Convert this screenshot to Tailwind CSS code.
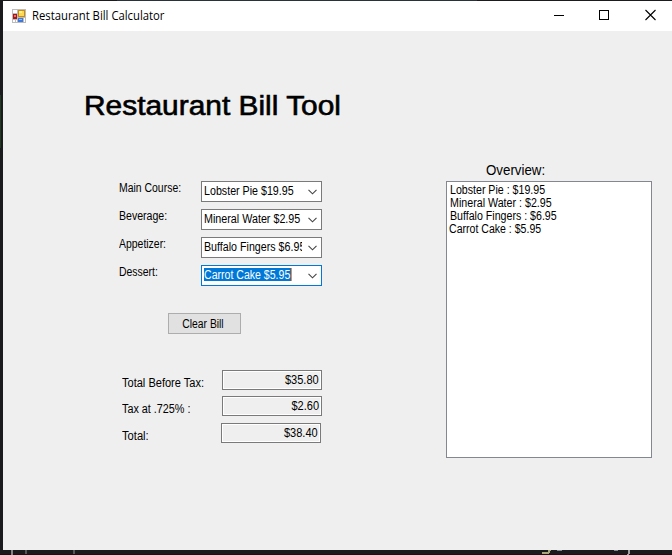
<!DOCTYPE html>
<html lang="en">
<head>
<meta charset="utf-8">
<title>Restaurant Bill Calculator</title>
<script src="https://cdn.jsdelivr.net/npm/@tailwindcss/browser@4"></script>
</head>
<body class="w-[672px] h-[555px] overflow-hidden bg-[#1b1b1d] pt-px pl-[3px] relative font-['Liberation_Sans',Arial,sans-serif] text-[12px] leading-[14px] text-black whitespace-nowrap">
  <!-- editor remnants behind the window -->
  <div class="absolute left-0 top-[95px] w-px h-[53px] bg-[#1f3a20]"></div>
  <svg class="absolute left-0 top-[550px]" width="672" height="5" shape-rendering="crispEdges">
    <path d="M0 4.5H672" stroke="#1a1017"/>
    <path d="M12 0V5" stroke="#858585" stroke-width="2"/>
    <path d="M26 0V4M74 0V4" stroke="#555" stroke-width="2"/>
    <path d="M542 3h6l2-3" stroke="#a9a67c" stroke-width="2" fill="none"/>
    <path d="M557 0.5h5M614 0.5h4" stroke="#7c8790"/>
    <path d="M629 0v3l-1 2" stroke="#a0a0a0" stroke-width="2" fill="none"/>
  </svg>
  <div class="absolute left-[117px] top-0 w-[360px] h-px bg-[#29323a]"></div>

  <div class="w-[669px] h-[549px] bg-[#efefef]">
    <header class="h-[30px] bg-white flex items-center">
      <svg class="ml-[9px] -mt-px" width="14" height="14" shape-rendering="crispEdges">
        <rect width="14" height="14" fill="#bcbcbc"/>
        <path d="M1 1h4v3H1zM1 11h2v2H1zM4 11h1v2H4zM12 9h1v4h-1z" fill="#fff"/>
        <rect x="6" y="1" width="7" height="7" fill="#c88d0c"/>
        <rect x="7" y="2" width="5" height="5" fill="#ffd84f"/>
        <rect x="7" y="2" width="3" height="2" fill="#fff0a0"/>
        <rect x="1" y="5" width="4" height="5" fill="#a91616"/>
        <rect x="2" y="6" width="2" height="2" fill="#f07068"/>
        <rect x="6" y="9" width="5" height="4" fill="#3e78d8"/>
        <rect x="7" y="10" width="3" height="1" fill="#8cbcff"/>
      </svg>
      <h1 class="ml-[6px] w-[400px] font-['Open_Sans','Noto_Sans',sans-serif] text-[12px] leading-4 origin-left scale-x-[0.94]">Restaurant Bill Calculator</h1>
      <svg class="ml-auto mr-[12px] -mt-[2px]" width="106" height="12" shape-rendering="crispEdges" fill="none" stroke="#000">
        <path d="M0 6.5H10M45.5 1.5h9v9h-9z"/>
        <path d="M91.5 1L101.5 11M101.5 1L91.5 11" shape-rendering="auto" stroke-width="1.1"/>
      </svg>
    </header>

    <main class="flex h-[519px]">
      <section class="w-[443px] pt-[59px]">
        <h2 class="ml-[81px] h-[32px] w-[260px] text-[27px] leading-[32px] origin-left scale-x-[1.107] [-webkit-text-stroke:0.6px_#000]">Restaurant Bill Tool</h2>

        <div class="mt-[59px] ml-[116px] flex flex-col gap-[7px]">
          <div class="flex h-[21px]"><label class="w-[82px] origin-left scale-x-[0.87]">Main Course:</label>
            <div class="w-[121px] h-[21px] border border-[#7a7a7a] bg-white flex items-center justify-between pl-[2px] pr-[4px]"><div class="-mt-px w-[98px] h-[14px] overflow-hidden"><span class="inline-block origin-left scale-x-[0.89]">Lobster Pie $19.95</span></div><svg width="9" height="6" fill="none" stroke="#444" stroke-width="1.1"><path d="M.5 .8L4.5 4.8L8.5 .8"/></svg></div></div>
          <div class="flex h-[21px]"><label class="w-[82px] origin-left scale-x-[0.88]">Beverage:</label>
            <div class="w-[121px] h-[21px] border border-[#7a7a7a] bg-white flex items-center justify-between pl-[2px] pr-[4px]"><div class="-mt-px w-[98px] h-[14px] overflow-hidden"><span class="inline-block origin-left scale-x-[0.895]">Mineral Water $2.95</span></div><svg width="9" height="6" fill="none" stroke="#444" stroke-width="1.1"><path d="M.5 .8L4.5 4.8L8.5 .8"/></svg></div></div>
          <div class="flex h-[21px]"><label class="w-[82px] origin-left scale-x-[0.87]">Appetizer:</label>
            <div class="w-[121px] h-[21px] border border-[#7a7a7a] bg-white flex items-center justify-between pl-[2px] pr-[4px]"><div class="-mt-px w-[98px] h-[14px] overflow-hidden"><span class="inline-block origin-left scale-x-[0.89]">Buffalo Fingers $6.95</span></div><svg width="9" height="6" fill="none" stroke="#444" stroke-width="1.1"><path d="M.5 .8L4.5 4.8L8.5 .8"/></svg></div></div>
          <div class="flex h-[21px]"><label class="w-[82px] origin-left scale-x-[0.87]">Dessert:</label>
            <div class="w-[121px] h-[21px] border border-[#0078d7] bg-white flex items-center justify-between pl-[2px] pr-[4px]"><div class="-mt-[2px] w-[88px] h-[13px] leading-[14px] bg-[#0078d7] text-white border-r border-[#ff8728]"><span class="inline-block origin-left scale-x-[0.88]">Carrot Cake $5.95</span></div><svg width="9" height="6" fill="none" stroke="#444" stroke-width="1.1"><path d="M.5 .8L4.5 4.8L8.5 .8"/></svg></div></div>
        </div>

        <button class="mt-[27px] ml-[165px] w-[73px] h-[21px] border border-[#adadad] bg-[#e1e1e1] flex items-center justify-center"><span class="-ml-[2px] scale-x-[0.86]">Clear Bill</span></button>

        <div class="mt-[36px] ml-[119px]">
          <div class="flex h-[20px]"><span class="mt-[6px] w-[100px] origin-left scale-x-[0.92]">Total Before Tax:</span>
            <output class="w-[100px] h-[20px] border border-[#7a7a7a] shadow-[inset_0_0_0_1px_#fff] flex items-center justify-end pr-[2px]"><span class="origin-right scale-x-[0.92]">$35.80</span></output></div>
          <div class="mt-[6px] flex h-[20px]"><span class="mt-[6px] w-[100px] origin-left scale-x-[0.9]">Tax at .725% :</span>
            <output class="w-[100px] h-[20px] border border-[#7a7a7a] shadow-[inset_0_0_0_1px_#fff] flex items-center justify-end pr-[2px]"><span class="origin-right scale-x-[0.92]">$2.60</span></output></div>
          <div class="mt-[7px] flex h-[20px]"><span class="mt-[6px] w-[99px] origin-left scale-x-[0.93]">Total:</span>
            <output class="w-[100px] h-[20px] border border-[#7a7a7a] shadow-[inset_0_0_0_1px_#fff] flex items-center justify-end pr-[2px]"><span class="origin-right scale-x-[0.92]">$38.40</span></output></div>
        </div>
      </section>

      <section class="pt-[131px]">
        <h3 class="ml-[40px] w-[100px] h-[19px] text-[14px] leading-[17px] origin-left scale-x-[0.95]">Overview:</h3>
        <ul class="w-[206px] h-[277px] border border-[#828790] bg-white pl-[3px] pt-[2px] leading-[13px]">
          <li class="origin-left scale-x-[0.885]">Lobster Pie : $19.95</li>
          <li class="origin-left scale-x-[0.89]">Mineral Water : $2.95</li>
          <li class="origin-left scale-x-[0.885]">Buffalo Fingers : $6.95</li>
          <li class="-ml-px origin-left scale-x-[0.88]">Carrot Cake : $5.95</li>
        </ul>
      </section>
    </main>
  </div>
</body>
</html>
